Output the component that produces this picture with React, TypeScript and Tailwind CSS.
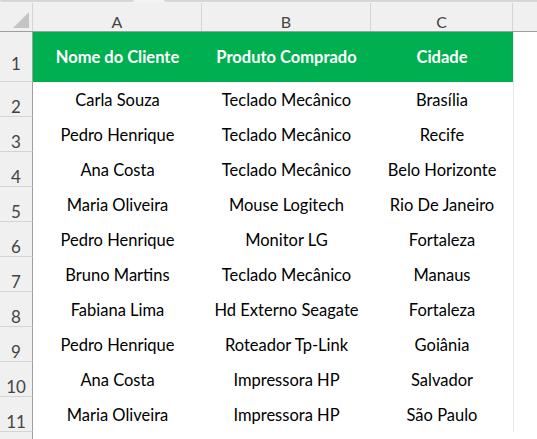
import React from 'react';

const rows: [string, string, string][] = [
    ['Carla Souza', 'Teclado Mecânico', 'Brasília'],
    ['Pedro Henrique', 'Teclado Mecânico', 'Recife'],
    ['Ana Costa', 'Teclado Mecânico', 'Belo Horizonte'],
    ['Maria Oliveira', 'Mouse Logitech', 'Rio De Janeiro'],
    ['Pedro Henrique', 'Monitor LG', 'Fortaleza'],
    ['Bruno Martins', 'Teclado Mecânico', 'Manaus'],
    ['Fabiana Lima', 'Hd Externo Seagate', 'Fortaleza'],
    ['Pedro Henrique', 'Roteador Tp-Link', 'Goiânia'],
    ['Ana Costa', 'Impressora HP', 'Salvador'],
    ['Maria Oliveira', 'Impressora HP', 'São Paulo'],
];

const cols = 'grid grid-cols-[33px_169px_169px_142px_1fr]';

export default function App() {
    return (
        <div className="w-[537px] h-[439px] overflow-hidden bg-white text-black font-['Lato','Open_Sans',sans-serif]">
            {/* formula bar remnants */}
            <div className="h-[3px] bg-[#f3f3f3] flex">
                <div className="w-[134px] h-[2px] bg-[#d6d6d6] rounded-b-[3px]" />
                <div className="w-[30px]" />
                <div className="flex-1 h-[2px] bg-[#d6d6d6] rounded-bl-[3px]" />
            </div>

            {/* column headers */}
            <div className={`${cols} h-[29px] bg-[#f0f0f0] border-b border-[#9e9e9e] text-[16px] text-[#444] leading-none`}>
                <div className="relative border-r border-[#d4d4d4]">
                    <div className="absolute right-[3px] bottom-[3px] w-0 h-0 border-l-[16px] border-l-transparent border-b-[16px] border-b-[#c4c4c4]" />
                </div>
                <div className="flex items-center justify-center pt-[9px] border-r border-[#d4d4d4]">A</div>
                <div className="flex items-center justify-center pt-[9px] border-r border-[#d4d4d4]">B</div>
                <div className="flex items-center justify-center pt-[9px] border-r border-[#d4d4d4]">C</div>
                <div />
            </div>

            {/* header row */}
            <div className={`${cols} h-[50px]`}>
                <div className="bg-[#f0f0f0] border-r border-[#9e9e9e] border-b border-b-[#d4d4d4] flex items-center justify-center pt-[14px] leading-none text-[17px] text-[#444]">1</div>
                <div className="col-span-3 grid grid-cols-[169px_169px_142px] bg-[#00b050] text-white font-bold text-[16.5px]">
                    <div className="flex items-center justify-center pt-[1px]">Nome do Cliente</div>
                    <div className="flex items-center justify-center pt-[1px]">Produto Comprado</div>
                    <div className="flex items-center justify-center pt-[1px]">Cidade</div>
                </div>
                <div className="border-l border-[#e4e4e4]" />
            </div>

            {rows.map((r, i) => (
                <div key={i} className={`${cols} h-[35px] text-[16.5px]`}>
                    <div className="bg-[#f0f0f0] border-r border-[#9e9e9e] border-b border-b-[#d4d4d4] flex items-center justify-center pt-[14px] leading-none text-[17px] text-[#444]">{i + 2}</div>
                    <div className="flex items-center justify-center pt-[2px]">{r[0]}</div>
                    <div className="flex items-center justify-center pt-[2px]">{r[1]}</div>
                    <div className="flex items-center justify-center pt-[2px]">{r[2]}</div>
                    <div className="border-l border-[#e4e4e4]" />
                </div>
            ))}

            <div className={`${cols} h-[10px]`}>
                <div className="bg-[#f0f0f0] border-r border-[#9e9e9e]" />
            </div>
        </div>
    );
}
